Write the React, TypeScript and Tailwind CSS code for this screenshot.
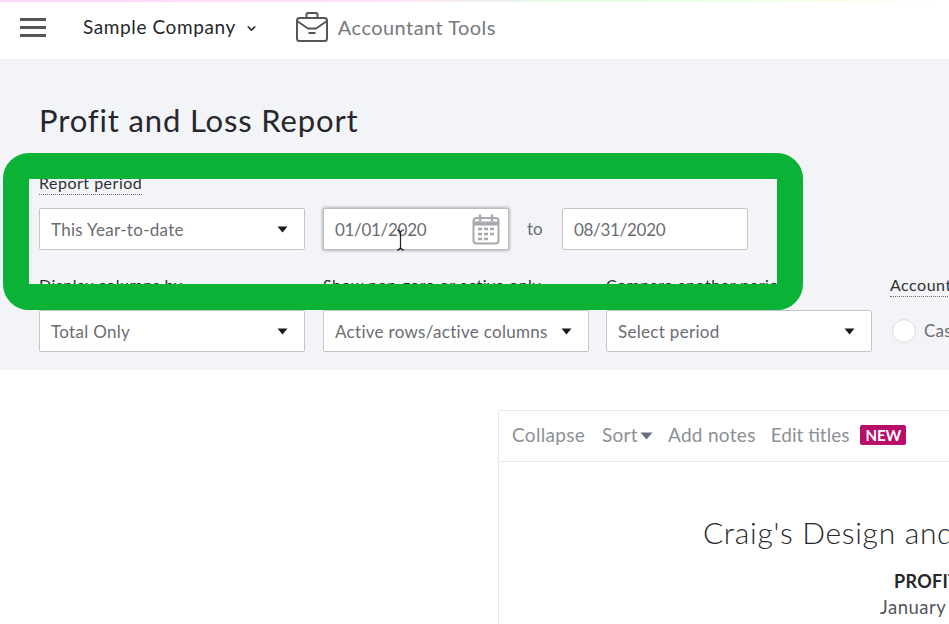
import { ChevronDown } from "lucide-react";

const font = "font-['Lato','Noto_Sans',sans-serif]";

function Caret() {
  return (
    <svg width="11" height="7" viewBox="0 0 11 7" className="shrink-0">
      <path d="M0.5 0.5h10L5.5 6.5z" fill="#1a1a1a" />
    </svg>
  );
}

function Select({ label, width }: { label: string; width: string }) {
  return (
    <div
      className={`flex h-[42px] items-center justify-between rounded-[2px] border border-[#c4c6cb] bg-white pl-[11px] pr-[16px] text-[17px] tracking-[0.3px] text-[#6b6c72] ${width}`}
    >
      <span className="whitespace-nowrap pt-[1px]">{label}</span>
      <Caret />
    </div>
  );
}

function FieldLabel({ children }: { children: string }) {
  return (
    <span className="mb-[13px] block h-[22px] w-fit whitespace-nowrap border-b border-dotted border-[#6b6c72] text-[16px] leading-[20px] tracking-[0.5px] text-[#2f3033]">
      {children}
    </span>
  );
}

function CalendarIcon() {
  return (
    <svg width="28" height="32" viewBox="0 0 28 32" fill="none" stroke="#a7a9ae" strokeWidth="2">
      <rect x="1.5" y="5" width="25" height="25.5" rx="3" />
      <path d="M2 10.5h24" strokeWidth="4" />
      <path d="M8 1.5v7M20 1.5v7" strokeWidth="2.5" />
      <path d="M6 16h4M12 16h4M18 16h4M6 21h4M12 21h4M18 21h4M6 26h4M12 26h4" strokeWidth="2.5" />
    </svg>
  );
}

function BriefcaseIcon() {
  return (
    <svg width="32" height="30" viewBox="0 0 32 30" fill="none" stroke="#55565b" strokeWidth="2" strokeLinejoin="round">
      <rect x="1" y="6" width="30" height="23" rx="2.5" />
      <path d="M10.5 6V2.5A1.5 1.5 0 0 1 12 1h8a1.5 1.5 0 0 1 1.5 1.5V6" />
      <path d="M1 9l11 7.5h8L31 9" />
      <path d="M12.5 21h7" />
    </svg>
  );
}

export default function App() {
  return (
    <div className={`relative flex h-[624px] w-[949px] flex-col overflow-hidden bg-white ${font}`}>
      <div className="h-[2px] bg-[linear-gradient(90deg,#ffd6f5_0%,#ffe3f8_42%,#e3ffe6_60%,#f3ffe6_85%,#ffffff_100%)]" />

      {/* top nav */}
      <div className="flex h-[57px] items-center pb-[7px]">
        <div className="ml-[20px] flex w-[26px] flex-col gap-[5px]">
          <div className="h-[3px] bg-[#55565b]" />
          <div className="h-[3px] bg-[#55565b]" />
          <div className="h-[3px] bg-[#55565b]" />
        </div>
        <span className="ml-[37px] text-[19px] tracking-[0.6px] text-[#26272b]">Sample Company</span>
        <ChevronDown className="ml-[9px] mt-[2px] text-[#33343a]" size={13} strokeWidth={3} />
        <div className="ml-[38px]">
          <BriefcaseIcon />
        </div>
        <span className="ml-[10px] text-[20px] tracking-[0.45px] text-[#77787d]">Accountant Tools</span>
      </div>

      {/* filter panel */}
      <div className="h-[311px] shrink-0 bg-[#f3f4f7] pl-[39px]">
        <h1 className="pt-[41px] text-[31px] leading-[40px] tracking-[0.85px] text-[#26272b]">Profit and Loss Report</h1>

        <div className="mt-[33px]">
          <FieldLabel>Report period</FieldLabel>
          <div className="flex items-center">
            <Select label="This Year-to-date" width="w-[266px]" />
            <div className="ml-[18px] flex h-[42px] w-[186px] items-center justify-between rounded-[2px] border border-[#b9bbc0] bg-white pl-[11px] pr-[8px] text-[17px] tracking-[-0.3px] text-[#6b6c72] shadow-[0_0_3px_1px_rgba(0,0,0,0.25)]">
              <span className="pt-[1px]">01/01/2020</span>
              <CalendarIcon />
            </div>
            <span className="ml-[18px] w-[35px] text-[17px] text-[#6b6c72]">to</span>
            <div className="flex h-[42px] w-[186px] items-center rounded-[2px] border border-[#c4c6cb] bg-white pl-[11px] pt-[1px] text-[17px] tracking-[-0.3px] text-[#6b6c72]">
              08/31/2020
            </div>
          </div>
        </div>

        <div className="mt-[25px] flex">
          <div className="w-[266px]">
            <FieldLabel>Display columns by</FieldLabel>
            <Select label="Total Only" width="w-[266px]" />
          </div>
          <div className="ml-[18px] w-[266px]">
            <FieldLabel>Show non-zero or active only</FieldLabel>
            <Select label="Active rows/active columns" width="w-[266px]" />
          </div>
          <div className="ml-[17px] w-[266px]">
            <FieldLabel>Compare another period</FieldLabel>
            <Select label="Select period" width="w-[266px]" />
          </div>
          <div className="ml-[18px] shrink-0">
            <FieldLabel>Accounting method</FieldLabel>
            <div className="flex h-[42px] items-center pl-[2px]">
              <div className="h-[24px] w-[24px] rounded-full border border-[#dcdde0] bg-white" />
              <span className="ml-[8px] text-[17px] tracking-[0.25px] text-[#6b6c72]">Cash</span>
            </div>
          </div>
        </div>
      </div>

      {/* report card */}
      <div className="ml-[498px] mt-[40px] w-[520px] flex-1 border-l border-t border-[#e6e8ec]">
        <div className="flex h-[51px] items-center border-b border-[#e6e8ec] pb-[2px] pl-[13px] text-[19px] tracking-[0.3px] text-[#8d9096]">
          <span>Collapse</span>
          <span className="ml-[17px]">Sort</span>
          <svg width="13" height="8" viewBox="0 0 13 8" className="ml-[2px] mt-[2px]">
            <path d="M0.5 0.5h12L6.5 7.5z" fill="#68727f" />
          </svg>
          <span className="ml-[15px]">Add notes</span>
          <span className="ml-[15px] tracking-normal">Edit titles</span>
          <span className="ml-[11px] rounded-[2px] bg-[#b80d68] px-[5px] text-[15px] font-bold leading-[20px] tracking-normal text-white">NEW</span>
        </div>
        <div className="whitespace-nowrap pl-[204px] pt-[51px] text-[#26272b]">
          <div className="text-[30px] font-light leading-[38px] tracking-[0.7px]">Craig's Design and Landscaping</div>
          <div className="ml-[191px] mt-[20px] text-[18px] font-bold leading-[20px] tracking-[0.3px]">PROFIT AND LOSS</div>
          <div className="ml-[177px] mt-[5px] text-[18.5px] leading-[22px] tracking-[0.5px] text-[#55565b]">January 1 - August 31, 2020</div>
        </div>
      </div>

      {/* green highlight drawn over the screen */}
      <div className="absolute left-[3px] top-[153px] h-[157px] w-[800px] rounded-[26px] border-[26px] border-[#0ab336]" />

      {/* text cursor */}
      <svg width="9" height="22" viewBox="0 0 9 22" className="absolute left-[396px] top-[229px]" fill="none" stroke="#222" strokeWidth="1.2">
        <path d="M1 1c2 0 3 1 3.5 2.5C5 2 6 1 8 1M4.5 3.5v15M1 21c2 0 3-1 3.5-2.5C5 20 6 21 8 21" />
      </svg>
    </div>
  );
}
